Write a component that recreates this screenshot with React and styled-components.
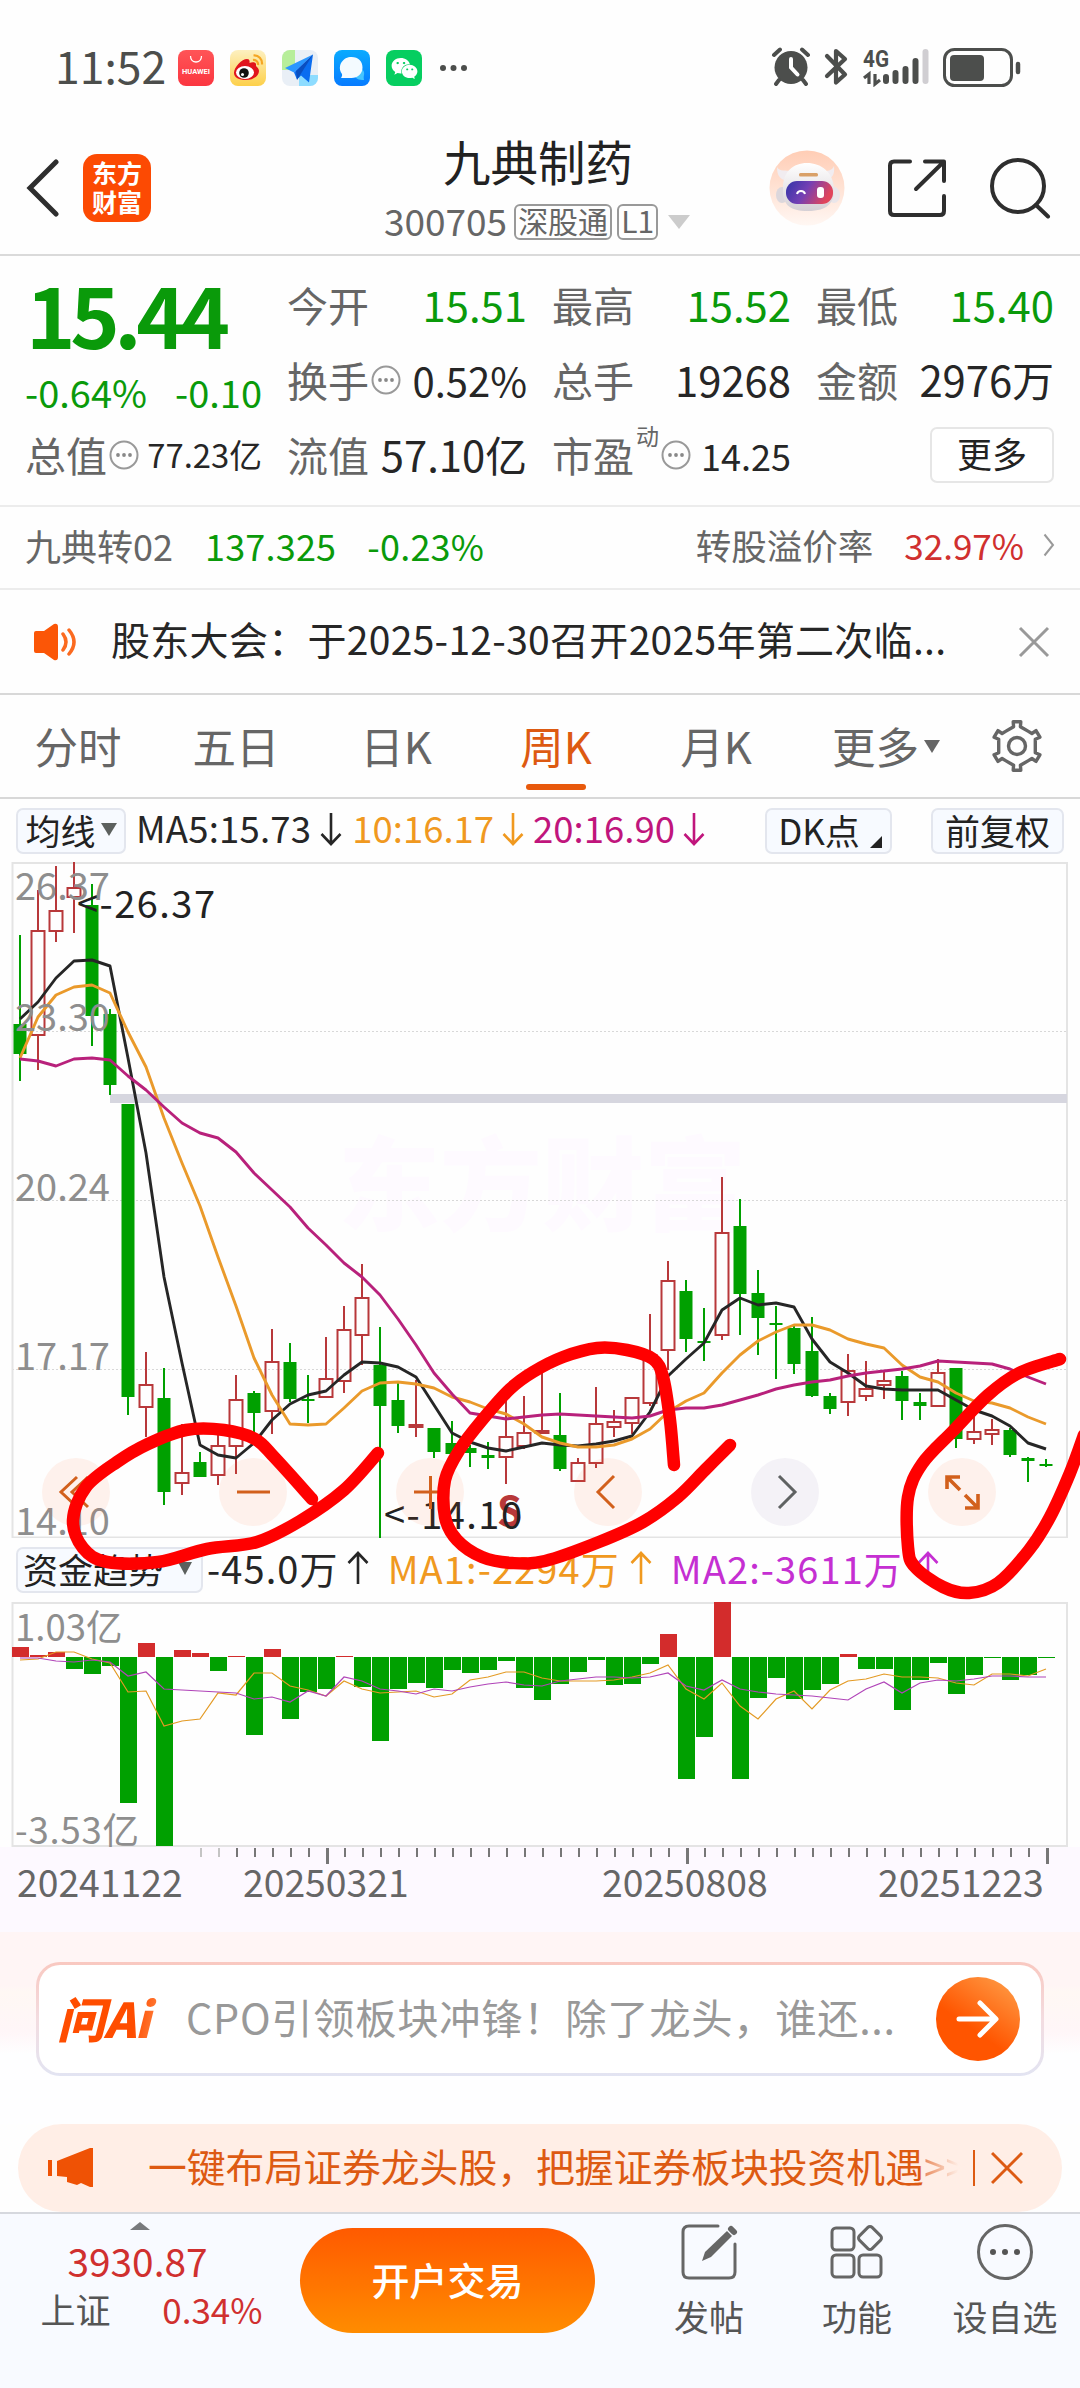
import styled, { createGlobalStyle, css } from 'styled-components'
import { FaWeixin } from 'react-icons/fa'

const GREEN = '#0a9a0a'
const CANDLE_GREEN = '#00a000'
const RED = '#b8383a'
const ORANGE = '#dd5a12'

// body top, body bottom, high, low, r = up week / g = down week
const candles = [
  [162, 192, 73, 219, 'g'], [69, 173, 28, 208, 'r'], [49, 69, 4, 80, 'r'], [26, 35, 0, 71, 'r'],
  [43, 154, 22, 184, 'g'], [152, 223, 147, 233, 'g'], [242, 535, 242, 553, 'g'], [523, 545, 490, 575, 'r'],
  [536, 630, 506, 643, 'g'], [611, 621, 562, 633, 'r'], [600, 615, 590, 615, 'g'], [584, 613, 571, 623, 'r'],
  [538, 584, 513, 612, 'r'], [531, 551, 529, 573, 'g'], [500, 549, 467, 572, 'r'], [500, 537, 481, 540, 'g'],
  [537, 539, 513, 561, 'g'], [517, 535, 475, 535, 'r'], [468, 519, 444, 531, 'r'], [436, 473, 402, 503, 'r'],
  [503, 544, 465, 676, 'g'], [538, 564, 521, 571, 'g'], [563, 565, 518, 575, 'r'], [566, 590, 566, 596, 'g'],
  [581, 592, 559, 592, 'g'], [586, 591, 583, 605, 'g'], [593, 596, 580, 607, 'g'], [575, 595, 538, 622, 'r'],
  [571, 584, 534, 587, 'r'], [569, 571, 508, 571, 'r'], [573, 607, 531, 609, 'g'], [601, 619, 596, 619, 'r'],
  [562, 601, 525, 606, 'r'], [560, 565, 548, 575, 'r'], [536, 561, 536, 572, 'r'], [493, 541, 452, 544, 'r'],
  [419, 488, 399, 508, 'r'], [429, 477, 418, 490, 'g'], [479, 481, 446, 499, 'g'], [371, 473, 315, 478, 'r'],
  [364, 432, 337, 473, 'g'], [431, 456, 408, 493, 'g'], [461, 463, 444, 517, 'g'], [466, 502, 463, 512, 'g'],
  [489, 534, 455, 535, 'g'], [534, 547, 531, 552, 'g'], [509, 540, 492, 554, 'r'], [527, 534, 499, 539, 'r'],
  [519, 523, 508, 537, 'r'], [514, 539, 509, 558, 'g'], [540, 544, 531, 558, 'g'], [511, 544, 497, 544, 'r'],
  [506, 577, 506, 586, 'g'], [570, 577, 555, 582, 'r'], [568, 572, 557, 583, 'r'], [568, 593, 566, 595, 'g'],
  [596, 599, 595, 620, 'g'], [602, 604, 597, 605, 'g'],
]

const ma5 = [157, 140, 116, 99, 98, 104, 196, 291, 415, 501, 583, 593, 596, 581, 558, 542, 533, 529, 513, 500, 501, 505, 515, 543, 571, 580, 586, 589, 585, 581, 583, 584, 582, 579, 574, 550, 514, 497, 481, 448, 436, 443, 441, 445, 477, 500, 511, 524, 527, 528, 528, 528, 538, 548, 554, 564, 581, 587]
const ma10 = [196, 155, 133, 125, 123, 131, 170, 205, 256, 301, 344, 395, 444, 496, 533, 562, 563, 562, 546, 529, 521, 520, 522, 526, 535, 540, 547, 552, 562, 575, 581, 585, 585, 583, 577, 567, 550, 539, 531, 511, 493, 479, 470, 463, 463, 468, 477, 482, 486, 503, 515, 520, 531, 539, 541, 546, 555, 562]
const ma20 = [197, 199, 204, 197, 196, 198, 214, 228, 245, 261, 271, 276, 290, 311, 328, 345, 366, 383, 401, 415, 433, 457, 483, 511, 532, 551, 554, 557, 555, 553, 552, 553, 554, 555, 556, 554, 548, 546, 546, 543, 538, 533, 527, 523, 520, 518, 514, 511, 509, 507, 504, 499, 500, 501, 502, 507, 515, 522]

const flows = [10, 2, 5, -12, -17, -9, -146, 14, -189, 7, 4, -14, 1, -78, 8, -62, -35, -32, 1, -30, -84, -32, -26, -31, -13, -16, -13, -4, -31, -43, -27, -15, -3, -28, -27, -7, 23, -122, -80, 55, -122, -41, -21, -42, -33, -27, 3, -12, -12, -53, -23, -6, -37, -18, -1, -23, -18, -1]
const flowMa1 = [58, 57, 50, 50, 57, 61, 90, 89, 124, 119, 117, 91, 93, 71, 71, 84, 88, 94, 79, 87, 91, 90, 89, 95, 92, 78, 75, 70, 70, 76, 79, 79, 79, 78, 75, 71, 63, 87, 97, 81, 104, 117, 97, 89, 107, 88, 79, 77, 72, 75, 75, 76, 81, 83, 72, 72, 74, 67]
const flowMa2 = [56, 56, 59, 60, 58, 60, 74, 70, 87, 88, 89, 90, 91, 97, 95, 100, 89, 94, 75, 79, 87, 89, 92, 87, 89, 85, 82, 80, 83, 84, 79, 77, 75, 75, 76, 75, 71, 84, 88, 78, 87, 90, 92, 93, 94, 96, 98, 87, 80, 91, 81, 78, 79, 77, 74, 74, 75, 75]

// hand drawn marks over the chart
const marks = [
  [[312, 637], [275, 596], [255, 577], [224, 568], [186, 568], [148, 582], [117, 600], [86, 625], [73, 658], [83, 686], [107, 700], [158, 700], [207, 687], [257, 680], [300, 659], [344, 628], [378, 591]],
  [[674, 603], [670, 558], [663, 515], [653, 497], [627, 488], [597, 486], [563, 495], [533, 510], [510, 527], [483, 557], [460, 587], [445, 618], [445, 655], [457, 678], [482, 695], [512, 701], [545, 699], [599, 680], [643, 660], [678, 635], [705, 608], [730, 583]],
  [[1060, 497], [1019, 511], [988, 533], [953, 569], [922, 602], [908, 635], [908, 685], [915, 705], [943, 725], [969, 731], [998, 721], [1029, 688], [1050, 655], [1070, 611], [1084, 573]],
]

const x = i => 20 + 18 * i
const line = values => values.map((y, i) => `${x(i)},${y}`).join(' ')

const smooth = pts => {
  let d = `M${pts[0]}`
  for (let i = 0; i < pts.length - 1; i++) {
    const p0 = pts[i - 1] || pts[i]
    const p1 = pts[i]
    const p2 = pts[i + 1]
    const p3 = pts[i + 2] || p2
    d += ` C${p1[0] + (p2[0] - p0[0]) / 6} ${p1[1] + (p2[1] - p0[1]) / 6} ${p2[0] - (p3[0] - p1[0]) / 6} ${p2[1] - (p3[1] - p1[1]) / 6} ${p2}`
  }
  return d
}

const gear = () => {
  const pts = []
  for (let i = 0; i < 6; i++) {
    const base = i * 60 - 90
    ;[[-22, 18.5], [-10, 19.5], [-9, 24.5], [9, 24.5], [10, 19.5], [22, 18.5]].forEach(([a, r]) => {
      const t = ((base + a) * Math.PI) / 180
      pts.push(`${(27 + r * Math.cos(t)).toFixed(1)},${(27 + r * Math.sin(t)).toFixed(1)}`)
    })
  }
  return pts.join(' ')
}

const Arrow = ({ up }) => (
  <svg width="22" height="34" viewBox="0 0 22 34" fill="none" stroke="currentColor" strokeWidth="2.6">
    <path d={up ? 'M11 33V3M1.5 12L11 2l9.5 10' : 'M11 1v30M1.5 22L11 32l9.5-10'} />
  </svg>
)

const Info = () => (
  <svg width="30" height="30" viewBox="0 0 30 30">
    <circle cx="15" cy="15" r="13.5" fill="none" stroke="#999" strokeWidth="2" />
    <g fill="#888"><circle cx="9" cy="15" r="1.9" /><circle cx="15" cy="15" r="1.9" /><circle cx="21" cy="15" r="1.9" /></g>
  </svg>
)

const StatusIcons = () => (
  <svg width="250" height="40" viewBox="0 0 250 40" fill="none">
    <g stroke="#4c4e4c" strokeLinecap="round">
      <circle cx="20" cy="20.500" r="16.500" fill="#4c4e4c" stroke="none" />
      <path d="M3 8l6-5.500M31 2.500l6 5.500M8 33l-3 4M32 33l3 4" strokeWidth="4" />
      <path d="M20 12v8.500l6.500 7" stroke="#fff" strokeWidth="4" />
      <path d="M56 9l18 18.500-9 8V4l9 8-18 17" strokeWidth="4.200" strokeLinejoin="round" />
    </g>
    <text x="92" y="20" fontSize="23" fontWeight="700" fontFamily="Roboto, sans-serif" fill="#4c4e4c" textLength="26" lengthAdjust="spacingAndGlyphs">4G</text>
    <path d="M93 31l5-4v10M104 27v10l5-4" stroke="#4c4e4c" strokeWidth="3.200" />
    <g stroke="#4c4e4c" strokeWidth="6" strokeLinecap="round">
      <path d="M115 30v4M124.500 26v8M134.500 22v12M144.500 14v20" />
      <path d="M154.500 5v29" stroke="#d0ced2" />
    </g>
    <rect x="173.500" y="2.500" width="67" height="36" rx="10" stroke="#4c4e4c" strokeWidth="3" />
    <rect x="179" y="8" width="34" height="26" rx="4" fill="#4c4e4c" />
    <path d="M247 17v8" stroke="#4c4e4c" strokeWidth="4.500" strokeLinecap="round" />
  </svg>
)

const Weibo = () => (
  <svg width="36" height="36" viewBox="0 0 36 36" fill="none">
    <path d="M4 23c0-6 8-14 13-14 2 0 3 1 2.500 4 3-1.500 7-1 6.500 2-.5 2 3 2 3 6 0 5-6 9-13 9S4 27.500 4 23z" fill="#e1141c" />
    <ellipse cx="15" cy="22.500" rx="9" ry="6.500" fill="#fff" />
    <circle cx="14" cy="23" r="4.800" fill="#111" />
    <circle cx="12.500" cy="24.500" r="1.500" fill="#fff" />
    <path d="M23 10c3-.5 5.500 2 5 5M23.500 5.500c5-.5 9 3.500 8.500 9" stroke="#f5a623" strokeWidth="2.200" />
  </svg>
)

const Plane = () => (
  <svg width="36" height="36" viewBox="0 0 36 36">
    <path d="M0 0h13v20H0z" fill="#b7ee9a" />
    <path d="M17 25h19v11H17z" fill="#8ddcff" />
    <path d="M31 4.500L3 18l9 4.500z" fill="#2a97ff" />
    <path d="M31 4.500L12 22.500l3 7 4-4 8 7z" fill="#0a6df0" />
    <path d="M31 4.500L14 21l1 9z" fill="#0a4fc0" />
  </svg>
)

const Chat = () => (
  <svg width="36" height="36" viewBox="0 0 36 36">
    <path d="M24 19c4-1 7 2 6 6-.3 1.500-.5 2 0 5-5 0-9-1-9-5z" fill="#45c5ff" />
    <path d="M17.500 7c7 0 11 4.500 11 10.500S24 28 17.500 28H7c2-3 1-4 0-5.500C3.500 15 9 7 17.500 7z" fill="#f4fbff" />
  </svg>
)

const Robot = () => (
  <svg width="76" height="76" viewBox="0 0 76 76">
    <defs>
      <linearGradient id="halo" x1="0" y1="0" x2="0" y2="1"><stop offset="0" stopColor="#ffcdb5" /><stop offset="1" stopColor="#fff7f3" /></linearGradient>
      <linearGradient id="visor" x1="0" y1="0" x2="1" y2=".3"><stop offset="0" stopColor="#3234a8" /><stop offset=".5" stopColor="#7440b4" /><stop offset="1" stopColor="#e0455c" /></linearGradient>
      <linearGradient id="shell" x1="0" y1="0" x2="0" y2="1"><stop offset="0" stopColor="#fff" /><stop offset="1" stopColor="#d5d0d5" /></linearGradient>
    </defs>
    <circle cx="38" cy="38" r="37.500" fill="url(#halo)" />
    <path d="M8 17c2 5 10 3 13 4l-6 9C9 28 8 22 8 17zM65 16c1 8-2 13-7 13l-4-8c4 0 9 0 11-5z" fill="#f1ecf0" />
    <ellipse cx="13" cy="45" rx="6" ry="8" fill="#dcd7dc" />
    <ellipse cx="65" cy="45" rx="6" ry="8" fill="#eae6ea" />
    <path d="M14 38c0-16 10-25 24-25s26 9 27 25c1 14-6 23-26 23S13 53 14 38z" fill="url(#shell)" />
    <rect x="17" y="31" width="47" height="23" rx="11" fill="url(#visor)" />
    <rect x="30" y="23" width="19" height="3.500" rx="1.500" fill="#d9a068" />
    <path d="M28 44c1-4 7-4 8 0" stroke="#fff" strokeWidth="2" fill="none" />
    <rect x="48" y="37" width="7" height="11" rx="3" fill="#fff" />
  </svg>
)

const tools = ['first', 'minus', 'plus', 'prev', 'next', 'full']
const toolPaths = {
  first: 'M35 19L19 34l16 15M46 19L30 34l16 15',
  minus: 'M18 34h33',
  plus: 'M18 34h33M34.500 18v33',
  prev: 'M40 18L24 34l16 16',
  next: 'M28 18l16 16-16 16',
  full: 'M19 31V19h13M20 20l12 12M37 37l12 12M37 50h13V36',
}

const PriceChart = () => (
  <svg width="1080" height="676" viewBox="0 0 1080 676" fontFamily="'Noto Sans CJK SC', sans-serif" fontSize="38">
    <text x="338" y="361" fontSize="102" fontWeight="900" fill="#fefaff">东方财富</text>
    <g stroke="#d8d8d8" strokeDasharray="2 2">
      <path d="M12 169.500H1067M12 338.500H1067M12 507.500H1067" />
    </g>
    <path d="M12.500 0V676M1067 0V676M12 675.500H1068M12 1H1068" stroke="#e4e4e4" strokeWidth="2" fill="none" />
    <rect x="110" y="232" width="957" height="9" fill="#d6d6df" />
    {candles.map(([top, bottom, high, low, kind], i) => kind === 'g' ? (
      <g key={i} fill={CANDLE_GREEN}>
        <rect x={x(i) - 1} y={high} width="2" height={low - high} />
        <rect x={x(i) - 6.5} y={top} width="13" height={bottom - top} />
      </g>
    ) : (
      <g key={i} stroke={RED} strokeWidth="2" fill="none">
        <path d={`M${x(i)} ${high}V${top}M${x(i)} ${bottom}V${low}`} />
        <rect x={x(i) - 6.500} y={top} width="13" height={Math.max(bottom - top, 1)} />
      </g>
    ))}
    <g fill="none" strokeWidth="2.900" strokeLinejoin="round">
      <polyline points={line(ma5)} stroke="#262626" />
      <polyline points={line(ma10)} stroke="#ea9a2b" />
      <polyline points={line(ma20)} stroke="#b8217b" />
    </g>
    <g fill="#8e8e8e">
      <text x="15" y="38">26.37</text>
      <text x="15" y="169">23.30</text>
      <text x="15" y="339">20.24</text>
      <text x="15" y="508">17.17</text>
      <text x="15" y="673">14.10</text>
    </g>
    <text x="497" y="664" fill={RED} fontWeight="700" fontSize="40">S</text>
    <g fill="#222">
      <text x="77" y="56" textLength="138">&lt;-26.37</text>
      <text x="384" y="667" textLength="138">&lt;-14.10</text>
    </g>
  </svg>
)

const FlowChart = () => (
  <svg width="1080" height="245" viewBox="0 0 1080 245" fontFamily="'Noto Sans CJK SC', sans-serif" fontSize="36.500">
    <path d="M12.500 0V245M1067 0V245M12 1H1068M12 244H1068" stroke="#e4e4e4" strokeWidth="2" />
    {flows.map((v, i) => (
      <rect key={i} x={x(i) - 8} y={v > 0 ? 55 - v : 55} width="17" height={Math.abs(v)} fill={v > 0 ? '#d32c2c' : CANDLE_GREEN} />
    ))}
    <g fill="none" strokeWidth="1.200">
      <polyline points={line(flowMa1)} stroke="#e39a24" />
      <polyline points={line(flowMa2)} stroke="#b044b8" />
    </g>
    <g fill="#8e8e8e">
      <text x="15" y="39">1.03亿</text>
      <text x="15" y="242" textLength="124">-3.53亿</text>
    </g>
  </svg>
)

const AxisTicks = () => (
  <svg width="1080" height="18" viewBox="0 0 1080 18">
    {Array.from({ length: 48 }, (_, k) => k + 10).map(i => {
      const major = [17, 37, 57].includes(i)
      return <rect key={i} x={x(i)} y="1" width={major ? 3 : 2} height={major ? 16 : 9} fill={i < 12 ? '#c4c4c4' : '#777'} />
    })}
  </svg>
)

const App = () => (
  <Phone>
    <GlobalStyle />
    <StatusBar>
      <Clock>11:52</Clock>
      <AppIcons>
        <AppIcon bg="linear-gradient(#ff5457, #fb3640)">
          <svg width="36" height="36" viewBox="0 0 36 36">
            <path d="M12.500 6c0 8 11 8 11 0" fill="none" stroke="#fff" strokeWidth="1.300" />
            <text x="4" y="23.500" fontSize="7.500" fontWeight="700" fontFamily="Roboto, sans-serif" fill="#fff" textLength="28">HUAWEI</text>
          </svg>
        </AppIcon>
        <AppIcon bg="linear-gradient(#fdf0c0, #fdd04a)"><Weibo /></AppIcon>
        <AppIcon bg="#e9eff6"><Plane /></AppIcon>
        <AppIcon bg="linear-gradient(#0aabff, #077bff)"><Chat /></AppIcon>
        <AppIcon bg="#06ce60"><FaWeixin size={27} color="#fff" /></AppIcon>
      </AppIcons>
      <svg width="30" height="8" viewBox="0 0 30 8" fill="#4c4e4c"><circle cx="4" cy="4" r="3" /><circle cx="14.500" cy="4" r="3" /><circle cx="25" cy="4" r="3" /></svg>
      <StatusRight><StatusIcons /></StatusRight>
    </StatusBar>

    <Header>
      <HeaderLeft>
        <svg width="34" height="58" viewBox="0 0 34 58" fill="none" stroke="#2e2e2e" strokeWidth="5"><path d="M31 3L5 29l26 26" strokeLinecap="round" /></svg>
        <Brand>东方<br />财富</Brand>
      </HeaderLeft>
      <HeaderTitle>
        <StockName>九典制药</StockName>
        <StockCode>
          <span>300705</span>
          <Tag>深股通</Tag>
          <Tag>L1</Tag>
          <Triangle size={11} height={14} color="#ccc" />
        </StockCode>
      </HeaderTitle>
      <HeaderRight>
        <Robot />
        <svg width="58" height="58" viewBox="0 0 58 58" fill="none" stroke="#2e2e2e" strokeWidth="4" strokeLinecap="round" strokeLinejoin="round">
          <path d="M22 2.500H6q-4 0-4 4V52q0 4 4 4H52q4 0 4-4V37M37 2.500H56V22M55 3.500L28 30" />
        </svg>
        <svg width="62" height="62" viewBox="0 0 62 62" fill="none" stroke="#2e2e2e" strokeWidth="4" strokeLinecap="round">
          <circle cx="29" cy="29" r="26" /><path d="M47 48l12 11.500" />
        </svg>
      </HeaderRight>
    </Header>

    <Quote>
      <PriceBlock>
        <Price>15.44</Price>
        <Change><span>-0.64%</span><span>-0.10</span></Change>
      </PriceBlock>
      <Cell><Label>今开</Label><Value down>15.51</Value></Cell>
      <Cell><Label>最高</Label><Value down>15.52</Value></Cell>
      <Cell><Label>最低</Label><Value down>15.40</Value></Cell>
      <Cell><Label>换手<Info /></Label><Value size={40}>0.52%</Value></Cell>
      <Cell><Label>总手</Label><Value>19268</Value></Cell>
      <Cell><Label>金额</Label><Value>2976万</Value></Cell>
      <Cell><Label>总值<Info /></Label><Value size={32.8}>77.23亿</Value></Cell>
      <Cell><Label>流值</Label><Value>57.10亿</Value></Cell>
      <Cell><Label>市盈<Sup>动</Sup><Info /></Label><Value size={36}>14.25</Value></Cell>
      <Cell end><MoreButton>更多</MoreButton></Cell>
    </Quote>

    <Bond>
      <BondName>九典转02</BondName>
      <BondValue>137.325</BondValue>
      <BondValue>-0.23%</BondValue>
      <Premium>转股溢价率</Premium>
      <PremiumValue>32.97%</PremiumValue>
      <svg width="12" height="24" viewBox="0 0 12 24" fill="none" stroke="#999" strokeWidth="2"><path d="M1.500 1.500L10 12 1.500 22.500" /></svg>
    </Bond>

    <Notice>
      <svg width="46" height="38" viewBox="0 0 46 38" fill="#fb5607">
        <path d="M2 10q0-2 2-2h8L22 1q4-1 4 3v30q0 4-4 3l-10-7H4q-2 0-2-2z" />
        <path d="M31 11q6 8 0 16M37 7q10 12 0 24" fill="none" stroke="#fb6a20" strokeWidth="3.500" strokeLinecap="round" />
      </svg>
      <NoticeText>股东大会：于2025-12-30召开2025年第二次临...</NoticeText>
      <svg width="32" height="32" viewBox="0 0 32 32" stroke="#999" strokeWidth="3"><path d="M2 2l28 28M30 2L2 30" /></svg>
    </Notice>

    <Tabs>
      <Tab>分时</Tab>
      <Tab>五日</Tab>
      <Tab>日K</Tab>
      <Tab active>周K</Tab>
      <Tab>月K</Tab>
      <Tab>更多<Triangle size={8} height={13} color="#666" /></Tab>
      <Tab>
        <svg width="54" height="54" viewBox="0 0 54 54" fill="none" stroke="#666" strokeWidth="3.400" strokeLinejoin="round">
          <polygon points={gear()} /><circle cx="27" cy="27" r="8.500" />
        </svg>
      </Tab>
    </Tabs>

    <Legend height={63}>
      <Select width={110}>均线<Triangle size={8} height={13} color="#5c605e" /></Select>
      <Series color="#262626" gap={9} left={10} track={0.2}>MA5:15.73<Arrow /></Series>
      <Series color="#f0991f" gap={8} left={10}>10:16.17<Arrow /></Series>
      <Series color="#c0157c" gap={8} left={9}>20:16.90<Arrow /></Series>
      <LegendRight>
        <Select width={127}>DK点<Corner /></Select>
        <Select width={133}>前复权</Select>
      </LegendRight>
    </Legend>

    <ChartArea>
      <PriceChart />
      <ChartTools>
        {tools.map(name => (
          <Tool key={name} muted={name === 'next'}>
            <svg width="68" height="68" viewBox="0 0 68 68" fill="none" stroke="currentColor" strokeWidth={name === 'full' ? 3.6 : 3}><path d={toolPaths[name]} /></svg>
          </Tool>
        ))}
      </ChartTools>
      <Legend height={64}>
        <Select width={187} spread>资金趋势<Triangle size={7.5} height={13} color="#5c605e" /></Select>
        <Series color="#262626" size={38} track={1.1} gap={8} left={4}>-45.0万<Arrow up /></Series>
        <Series color="#f0991f" size={38} track={1.1} gap={10} left={19}>MA1:-2294万<Arrow up /></Series>
        <Series color="#c52fd2" size={38} track={1.1} gap={14} left={19}>MA2:-3611万<Arrow up /></Series>
      </Legend>
      <Marks width="1080" height="750" viewBox="0 0 1080 750" fill="none" stroke="#f00" strokeWidth="12.500" strokeLinecap="round" strokeLinejoin="round">
        {marks.map((pts, i) => <path key={i} d={smooth(pts)} />)}
      </Marks>
    </ChartArea>
    <FlowChart />
    <Axis>
      <AxisTicks />
      <Dates>
        <DateText width={226}>20241122</DateText>
        <DateText width={359}>20250321</DateText>
        <DateText width={276}>20250808</DateText>
        <DateText>20251223</DateText>
      </Dates>
    </Axis>

    <AskSection>
      <AskBox>
        <AskLogo>问Ai</AskLogo>
        <AskText>CPO引领板块冲锋！除了龙头，谁还...</AskText>
        <AskButton>
          <svg width="44" height="40" viewBox="0 0 44 40" fill="none" stroke="#fff" strokeWidth="5" strokeLinecap="round" strokeLinejoin="round"><path d="M3 20h36M24 4l16 16-16 16" /></svg>
        </AskButton>
      </AskBox>
    </AskSection>

    <Promo>
      <svg width="46" height="40" viewBox="0 0 46 40" fill="#ef5205"><path d="M0 12h4v16H0zM9 13L42 0h3v39h-3l-9-4-4 2-10-3v-5L9 28z" /></svg>
      <PromoText>一键布局证券龙头股，把握证券板块投资机遇<Fade>&gt;&gt;</Fade></PromoText>
      <PromoClose>
        <svg width="32" height="34" viewBox="0 0 32 34" stroke="currentColor" strokeWidth="3"><path d="M1 2l30 30M31 2L1 32" /></svg>
      </PromoClose>
    </Promo>

    <BottomBar>
      <IndexBlock>
        <Triangle up size={10} height={8} color="#77797c" />
        <IndexValue>3930.87</IndexValue>
        <IndexRow><span>上证</span><IndexPercent>0.34%</IndexPercent></IndexRow>
      </IndexBlock>
      <TradeButton>开户交易</TradeButton>
      <NavItem>
        <svg width="58" height="58" viewBox="0 0 58 58" fill="none" stroke="#666" strokeWidth="3" strokeLinecap="round">
          <path d="M38 3H9q-6 0-6 6v40q0 6 6 6h40q6 0 6-6V21" />
          <path d="M22 38l3-9L47 8l5 5-21 21z" fill="#666" stroke="none" />
          <path d="M51 6l3 3" strokeWidth="6" />
        </svg>
        发帖
      </NavItem>
      <NavItem>
        <svg width="58" height="58" viewBox="0 0 58 58" fill="none" stroke="#666" strokeWidth="3">
          <rect x="4" y="5" width="22" height="22" rx="4" />
          <rect x="4" y="32" width="22" height="22" rx="4" />
          <rect x="31" y="32" width="22" height="22" rx="4" />
          <rect x="33" y="6" width="18" height="18" rx="3" transform="rotate(45 42 15)" />
        </svg>
        功能
      </NavItem>
      <NavItem>
        <svg width="58" height="58" viewBox="0 0 58 58">
          <circle cx="29" cy="29" r="26.500" fill="none" stroke="#666" strokeWidth="3" />
          <g fill="#555"><circle cx="17" cy="29" r="3" /><circle cx="29" cy="29" r="3" /><circle cx="41" cy="29" r="3" /></g>
        </svg>
        设自选
      </NavItem>
    </BottomBar>
  </Phone>
)

const GlobalStyle = createGlobalStyle`
  body {
    margin: 0;
    background: #fefefe;
    font-family: 'Noto Sans CJK SC', sans-serif;
    color: #2b2b2b;
  }
  * {
    box-sizing: border-box;
  }
  svg {
    display: block;
    flex-shrink: 0;
  }
`
const Phone = styled.div`
  width: 1080px;
  height: 2388px;
  overflow: hidden;
  display: flex;
  flex-direction: column;
  line-height: 1;
  white-space: nowrap;

  > * {
    flex-shrink: 0;
  }
`
const StatusBar = styled.div`
  height: 136px;
  padding: 0 59px 0 55px;
  display: flex;
  align-items: center;
`
const Clock = styled.div`
  width: 123px;
  font-size: 44.5px;
  color: #4c4e4c;
  padding-bottom: 6px;
`
const AppIcons = styled.div`
  display: flex;
  gap: 16px;
  margin-right: 17px;
`
const AppIcon = styled.div`
  width: 36px;
  height: 36px;
  border-radius: 8px;
  overflow: hidden;
  display: flex;
  align-items: center;
  justify-content: center;
  background: ${({ bg }) => bg};
`
const StatusRight = styled.div`
  margin-left: auto;
  margin-bottom: 2px;
`
const Header = styled.header`
  height: 120px;
  padding: 0 29px 0 25px;
  display: grid;
  grid-template-columns: 1fr auto 1fr;
  border-bottom: 2px solid #dadada;
`
const HeaderLeft = styled.div`
  display: flex;
  align-items: center;
  gap: 24px;
  padding-bottom: 14px;
`
const Brand = styled.div`
  width: 68px;
  height: 68px;
  padding-top: 4px;
  border-radius: 14px;
  background: #fc4a03;
  color: #fff;
  font-size: 25px;
  font-weight: 700;
  line-height: 29px;
  text-align: center;
`
const HeaderTitle = styled.div`
  display: flex;
  flex-direction: column;
  align-items: center;
`
const StockName = styled.div`
  font-size: 47.5px;
  line-height: 50px;
  color: #222;
`
const StockCode = styled.div`
  display: flex;
  align-items: center;
  height: 36px;
  margin-top: 18px;
  margin-right: 2px;
  font-size: 37px;
  line-height: 30px;
  color: #666;

  > span {
    padding-bottom: 5px;
    margin-right: 7px;
  }
`
const Tag = styled.div`
  height: 36px;
  padding: 0 2px;
  margin-right: 5px;
  border: 2px solid #999;
  border-radius: 6px;
  font-size: 30px;
  line-height: 29px;
`
const Triangle = styled.i`
  margin-left: 5px;
  border: ${({ size }) => size}px solid transparent;
  border-${({ up }) => (up ? 'bottom' : 'top')}: ${({ height }) => height}px solid ${({ color }) => color};
  border-${({ up }) => (up ? 'top' : 'bottom')}: 0;
`
const HeaderRight = styled.div`
  display: flex;
  align-items: center;
  justify-content: flex-end;
  gap: 43px;
  padding-bottom: 14px;
`
const Quote = styled.section`
  height: 251px;
  padding: 13px 25px 11px 26px;
  display: grid;
  grid-template-columns: 236px 239px 238px 237px;
  grid-template-rows: repeat(3, 75px);
  column-gap: 26px;
  border-bottom: 2px solid #ececec;
`
const PriceBlock = styled.div`
  grid-row: span 2;
  color: ${GREEN};
`
const Price = styled.div`
  height: 98px;
  font-size: 84px;
  font-weight: 700;
  line-height: 88px;
  letter-spacing: -5.4px;
`
const Change = styled.div`
  display: flex;
  justify-content: space-between;
  margin-left: -1px;
  font-size: 38px;
  line-height: 50px;
`
const Cell = styled.div`
  display: flex;
  align-items: center;
  justify-content: ${({ end }) => (end ? 'flex-end' : 'space-between')};
  padding-bottom: 4px;
`
const Label = styled.div`
  display: flex;
  align-items: center;
  gap: 2px;
  margin-left: -1px;
  font-size: 41px;
  color: #666;
`
const Value = styled.div`
  font-size: ${({ size }) => size || 41.8}px;
  color: ${({ down }) => (down ? GREEN : '#262626')};
`
const Sup = styled.span`
  align-self: flex-start;
  margin-top: -10px;
  font-size: 23px;
`
const MoreButton = styled.button`
  width: 124px;
  height: 56px;
  padding: 0 0 4px;
  border: 2px solid #e6e6e6;
  border-radius: 7px;
  background: #fff;
  font: 35px/1 'Noto Sans CJK SC', sans-serif;
  color: #222;
`
const Bond = styled.div`
  height: 83px;
  padding: 0 25px 6px 25px;
  display: flex;
  align-items: center;
  border-bottom: 2px solid #ececec;
  font-size: 36px;
`
const BondName = styled.span`
  width: 180px;
  color: #666;
`
const BondValue = styled.span`
  margin-right: 31px;
  letter-spacing: 0.2px;
  color: ${GREEN};
`
const Premium = styled.span`
  margin-left: auto;
  font-size: 35.5px;
  color: #666;
`
const PremiumValue = styled.span`
  margin: 0 19px 0 31px;
  font-size: 35px;
  color: #d0302f;
`
const Notice = styled.div`
  height: 105px;
  padding: 0 30px 0 32px;
  display: flex;
  align-items: center;
  border-bottom: 2px solid #d8d8d8;
`
const NoticeText = styled.div`
  flex: 1;
  padding: 0 0 6px 33px;
  font-size: 39px;
  letter-spacing: 0.3px;
  color: #262626;
`
const Tabs = styled.nav`
  height: 104px;
  display: grid;
  grid-template-columns: 156px repeat(4, 160px) 180px 82px;
  border-bottom: 2px solid #d8d8d8;
`
const Tab = styled.div`
  position: relative;
  display: flex;
  align-items: center;
  justify-content: center;
  font-size: 43.5px;
  color: #666;

  ${({ active }) => active && css`
    color: ${ORANGE};

    &::after {
      content: '';
      position: absolute;
      bottom: 7px;
      width: 60px;
      height: 6px;
      border-radius: 3px;
      background: #e8590c;
    }
  `}
`
const Legend = styled.div`
  height: ${({ height }) => height}px;
  padding: 0 16px 0 16px;
  display: flex;
  align-items: center;
`
const Select = styled.div`
  width: ${({ width }) => width}px;
  height: 46px;
  padding: ${({ spread }) => (spread ? '0 9px 3px 5px' : '0 6px 3px')};
  display: flex;
  align-items: center;
  justify-content: ${({ spread }) => (spread ? 'space-between' : 'center')};
  border: 2px solid #e3e6ee;
  border-radius: 7px;
  background: #f7faff;
  font-size: 35px;
  color: #222;
`
const Series = styled.div`
  display: flex;
  align-items: center;
  gap: ${({ gap }) => gap}px;
  margin-left: ${({ left }) => left}px;
  padding-bottom: 4px;
  font-size: ${({ size }) => size || 36.5}px;
  letter-spacing: ${({ track }) => track || 0}px;
  color: ${({ color }) => color};
`
const LegendRight = styled.div`
  margin-left: auto;
  display: flex;
  gap: 39px;
`
const Corner = styled.i`
  align-self: flex-end;
  margin: 0 -3px 1px 10px;
  border-left: 12px solid transparent;
  border-bottom: 12px solid #222;
`
const ChartArea = styled.div`
  position: relative;
  height: 740px;
`
const ChartTools = styled.div`
  position: absolute;
  top: 596px;
  left: 42px;
  width: 954px;
  display: flex;
  justify-content: space-between;
`
const Tool = styled.div`
  width: 68px;
  height: 68px;
  border-radius: 50%;
  background: ${({ muted }) => (muted ? 'rgba(120, 80, 150, 0.07)' : 'rgba(255, 110, 60, 0.09)')};
  color: ${({ muted }) => (muted ? '#5f6262' : '#d2601c')};
`
const Marks = styled.svg`
  position: absolute;
  top: 0;
  left: 0;
`
const Axis = styled.div`
  height: 85px;
  background: #fdf9ff;
`
const Dates = styled.div`
  display: flex;
  margin-top: -3px;
  padding-left: 17px;
`
const DateText = styled.div`
  width: ${({ width }) => (width ? `${width}px` : 'auto')};
  font-size: 37.3px;
  line-height: 38px;
  color: #666;
`
const AskSection = styled.section`
  height: 192px;
  padding: 30px 36px 0;
  background: linear-gradient(#fff5f5 0 54px, #fff8f4 60px, #fff6f8 100px, #fefeff 122px);
`
const AskBox = styled.div`
  height: 114px;
  padding: 0 21px 0 17px;
  display: flex;
  align-items: center;
  border: 3px solid transparent;
  border-radius: 24px;
  background: linear-gradient(#fff, #fff) padding-box, linear-gradient(#f9c8c0, #f3dce0 50%, #e2e4f2) border-box;
`
const AskLogo = styled.div`
  width: 130px;
  padding: 0 0 5px 1px;
  font-size: 48px;
  font-weight: 900;
  font-style: italic;
  letter-spacing: -1px;
  background: linear-gradient(100deg, #ff4d00 60%, #ff9a5c 85%);
  background-clip: text;
  color: transparent;
`
const AskText = styled.div`
  flex: 1;
  padding-bottom: 5px;
  font-size: 41.3px;
  letter-spacing: 0.7px;
  color: #999;
`
const AskButton = styled.div`
  width: 84px;
  height: 84px;
  border-radius: 50%;
  display: flex;
  align-items: center;
  justify-content: center;
  background: linear-gradient(215deg, #ff9640 10%, #ff5500 60%);
`
const Promo = styled.div`
  height: 88px;
  margin: 0 18px;
  padding: 0 39px 0 30px;
  display: flex;
  align-items: center;
  border-radius: 44px;
  background: #ffeee6;
`
const PromoText = styled.div`
  flex: 1;
  overflow: hidden;
  padding: 2px 0 8px 54px;
  font-size: 38.8px;
  color: ${ORANGE};
`
const Fade = styled.span`
  background: linear-gradient(90deg, #e98a5c, #ffeee6 80%);
  background-clip: text;
  color: transparent;
`
const PromoClose = styled.div`
  height: 36px;
  padding-left: 16px;
  display: flex;
  align-items: center;
  border-left: 2px solid ${ORANGE};
  color: ${ORANGE};
`
const BottomBar = styled.footer`
  height: 176px;
  padding-left: 26px;
  display: flex;
  align-items: flex-start;
  border-top: 2px solid #d6d8de;
  background: #f8faff;
`
const IndexBlock = styled.div`
  width: 274px;
  padding: 8px 51px 0 0;
  display: flex;
  flex-direction: column;
  align-items: center;
`
const IndexValue = styled.div`
  margin-top: 10px;
  font-size: 38.8px;
  line-height: 40px;
  color: #d0302f;
`
const IndexRow = styled.div`
  width: 222px;
  margin: 9px 0 0 28px;
  display: flex;
  justify-content: space-between;
  font-size: 35px;
  line-height: 40px;
  color: #555;
`
const IndexPercent = styled.span`
  color: #d0302f;
`
const TradeButton = styled.button`
  width: 295px;
  height: 105px;
  margin: 14px 40px 0 0;
  padding: 0 0 4px;
  border: 0;
  border-radius: 53px;
  background: linear-gradient(#ff5a00, #ff8c00);
  color: #fff;
  font: 500 38px/1 'Noto Sans CJK SC', sans-serif;
`
const NavItem = styled.div`
  width: 148px;
  padding-top: 9px;
  display: flex;
  flex-direction: column;
  align-items: center;
  gap: 17px;
  font-size: 35px;
  color: #555;
`
export default App
